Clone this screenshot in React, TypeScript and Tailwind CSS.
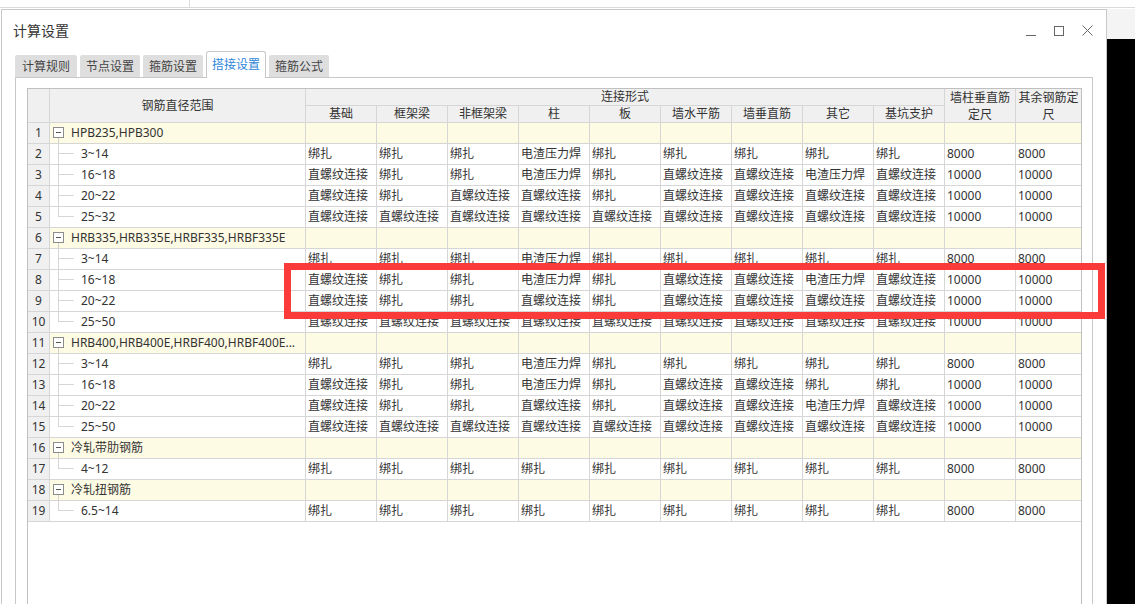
import React from 'react';

const Z = '直螺纹连接';
const B = '绑扎';
const D = '电渣压力焊';

type Row =
  | { kind: 'group'; no: number; label: string }
  | { kind: 'item'; no: number; label: string; last?: boolean; cells: string[] };

const rows: Row[] = [
  { kind: 'group', no: 1, label: 'HPB235,HPB300' },
  { kind: 'item', no: 2, label: '3~14', cells: [B, B, B, D, B, B, B, B, B, '8000', '8000'] },
  { kind: 'item', no: 3, label: '16~18', cells: [Z, B, B, D, B, Z, Z, D, Z, '10000', '10000'] },
  { kind: 'item', no: 4, label: '20~22', cells: [Z, B, Z, Z, B, Z, Z, Z, Z, '10000', '10000'] },
  { kind: 'item', no: 5, label: '25~32', last: true, cells: [Z, Z, Z, Z, Z, Z, Z, Z, Z, '10000', '10000'] },
  { kind: 'group', no: 6, label: 'HRB335,HRB335E,HRBF335,HRBF335E' },
  { kind: 'item', no: 7, label: '3~14', cells: [B, B, B, D, B, B, B, B, B, '8000', '8000'] },
  { kind: 'item', no: 8, label: '16~18', cells: [Z, B, B, D, B, Z, Z, D, Z, '10000', '10000'] },
  { kind: 'item', no: 9, label: '20~22', cells: [Z, B, B, Z, B, Z, Z, Z, Z, '10000', '10000'] },
  { kind: 'item', no: 10, label: '25~50', last: true, cells: [Z, Z, Z, Z, Z, Z, Z, Z, Z, '10000', '10000'] },
  { kind: 'group', no: 11, label: 'HRB400,HRB400E,HRBF400,HRBF400E...' },
  { kind: 'item', no: 12, label: '3~14', cells: [B, B, B, D, B, B, B, B, B, '8000', '8000'] },
  { kind: 'item', no: 13, label: '16~18', cells: [Z, B, B, D, B, Z, Z, B, B, '10000', '10000'] },
  { kind: 'item', no: 14, label: '20~22', cells: [Z, B, B, Z, B, Z, Z, D, Z, '10000', '10000'] },
  { kind: 'item', no: 15, label: '25~50', last: true, cells: [Z, Z, Z, Z, Z, Z, Z, Z, Z, '10000', '10000'] },
  { kind: 'group', no: 16, label: '冷轧带肋钢筋' },
  { kind: 'item', no: 17, label: '4~12', last: true, cells: [B, B, B, B, B, B, B, B, B, '8000', '8000'] },
  { kind: 'group', no: 18, label: '冷轧扭钢筋' },
  { kind: 'item', no: 19, label: '6.5~14', last: true, cells: [B, B, B, B, B, B, B, B, B, '8000', '8000'] },
];

const subHeads = ['基础', '框架梁', '非框架梁', '柱', '板', '墙水平筋', '墙垂直筋', '其它', '基坑支护'];
const tabs = ['计算规则', '节点设置', '箍筋设置', '搭接设置', '箍筋公式'];

const DataCells = ({ cells, bg }: { cells: string[]; bg: string }) => (
  <>
    {cells.map((c, i) => (
      <div
        key={i}
        className={`${i === 10 ? 'w-[65px]' : 'w-[71px] border-r border-[#d6d6d6]'} ${bg} shrink-0 overflow-hidden whitespace-nowrap pl-[2px] leading-[20px]`}
      >
        {c}
      </div>
    ))}
  </>
);

const RowNo = ({ no }: { no: number }) => (
  <div className="w-[22px] shrink-0 border-r border-[#d6d6d6] bg-[#f0f0f0] text-center leading-[20px]">{no}</div>
);

const App: React.FC = () => {
  return (
    <div className="relative flex h-[604px] w-[1135px] flex-col overflow-hidden bg-white font-['Noto_Sans','Noto_Sans_CJK_SC',sans-serif] text-[12px] text-[#333]">
      {/* strip of the window behind */}
      <div className="flex h-[8px] shrink-0 overflow-hidden border-b border-[#dadada] text-[14px] text-[#333]">
        <div className="-mt-[17px] w-[190px] border-r border-[#dadada] pl-[2px] leading-[20px]">钢筋设置</div>
        <div className="-mt-[17px] pl-[64px] leading-[20px]">钢筋设置</div>
      </div>
      <div className="h-px shrink-0" />

      <div className="flex min-h-0 flex-1">
        <div className="w-px shrink-0" />

        {/* Dialog */}
        <div className="flex w-[1106px] shrink-0 flex-col border border-b-0 border-[#c8c8c8] bg-white">
          {/* Title bar */}
          <div className="flex h-[41px] shrink-0 items-center justify-between pl-[11px] pr-[13px]">
            <span className="text-[14px] text-[#333]">计算设置</span>
            <div className="flex items-center gap-[18px]">
              <svg width="10" height="10" viewBox="0 0 10 10">
                <line x1="0" y1="9.5" x2="10" y2="9.5" stroke="#666" strokeWidth="1" />
              </svg>
              <svg width="10" height="10" viewBox="0 0 10 10">
                <rect x="0.5" y="0.5" width="9" height="9" fill="none" stroke="#666" strokeWidth="1" />
              </svg>
              <svg width="11" height="11" viewBox="0 0 11 11">
                <path d="M0.5 0.5 L10.5 10.5 M10.5 0.5 L0.5 10.5" stroke="#666" strokeWidth="1" />
              </svg>
            </div>
          </div>

          {/* Tabs */}
          <div className="flex h-[26px] shrink-0 items-end gap-[3px] pl-[13px]">
            {tabs.map((t, i) =>
              i === 3 ? (
                <div
                  key={t}
                  className="relative z-10 -mb-px flex h-[27px] w-[60px] items-center justify-center rounded-t-[3px] border border-b-0 border-[#c8c8c8] bg-white text-[#2f86d8]"
                >
                  {t}
                </div>
              ) : (
                <div
                  key={t}
                  className={`flex h-[22px] ${i === 0 ? 'w-[62px]' : 'w-[60px]'} items-center justify-center rounded-t-[2px] bg-[#dedede] pt-[1px] text-[#444]`}
                >
                  {t}
                </div>
              )
            )}
          </div>

          {/* Tab panel */}
          <div className="ml-[13px] flex min-h-0 w-[1078px] flex-1 flex-col border border-b-0 border-[#c8c8c8] pl-[11px] pt-[10px]">
            <div className="min-h-0 w-[1055px] flex-1 border border-b-0 border-[#c0c0c0]">
              {/* Header */}
              <div className="flex h-[34px] border-b border-[#d6d6d6] bg-[#f0f0f0]">
                <div className="w-[22px] shrink-0 border-r border-[#d6d6d6]" />
                <div className="flex w-[256px] shrink-0 items-center justify-center border-r border-[#d6d6d6]">钢筋直径范围</div>
                <div className="flex w-[639px] shrink-0 flex-col">
                  <div className="h-[17px] border-b border-r border-[#d6d6d6] text-center leading-[16px]">连接形式</div>
                  <div className="flex h-[16px]">
                    {subHeads.map((h) => (
                      <div key={h} className="w-[71px] shrink-0 border-r border-[#d6d6d6] text-center leading-[16px]">
                        {h}
                      </div>
                    ))}
                  </div>
                </div>
                <div className="w-[71px] shrink-0 border-r border-[#d6d6d6] text-center leading-[17px]">墙柱垂直筋定尺</div>
                <div className="w-[65px] shrink-0 text-center leading-[17px]">其余钢筋定尺</div>
              </div>

              {/* Body */}
              {rows.map((r) =>
                r.kind === 'group' ? (
                  <div key={r.no} className="flex h-[21px] border-b border-[#d6d6d6]">
                    <RowNo no={r.no} />
                    <div className="flex w-[256px] shrink-0 items-center overflow-hidden whitespace-nowrap border-r border-[#d6d6d6] bg-[#fefbe4] pl-[3px]">
                      <div className="flex h-[20px] w-[11px] shrink-0 flex-col">
                        <div className="h-[4px]" />
                        <div className="flex h-[11px] items-center justify-center border border-[#8c8c8c] bg-white">
                          <div className="h-px w-[5px] bg-[#555]" />
                        </div>
                        <div className="ml-[5px] h-[5px] border-l border-[#d0d0d0]" />
                      </div>
                      <span className="ml-[7px] leading-[20px]">{r.label}</span>
                    </div>
                    <DataCells cells={Array(11).fill('')} bg="bg-[#fefbe4]" />
                  </div>
                ) : (
                  <div key={r.no} className="flex h-[21px] border-b border-[#d6d6d6]">
                    <RowNo no={r.no} />
                    <div className="flex w-[256px] shrink-0 items-stretch border-r border-[#d6d6d6] bg-white">
                      <div className="w-[8px] shrink-0" />
                      <div className="flex w-[16px] shrink-0 flex-col">
                        <div className="h-[10px] border-b border-l border-[#d6d6d6]" />
                        <div className={`h-[10px] ${r.last ? '' : 'border-l border-[#d6d6d6]'}`} />
                      </div>
                      <span className="pl-[7px] leading-[20px]">{r.label}</span>
                    </div>
                    <DataCells cells={r.cells} bg="bg-white" />
                  </div>
                )
              )}
            </div>
          </div>
        </div>

        {/* Right edge: desktop behind */}
        <div className="flex flex-1 flex-col">
          <div className="h-[30px] bg-[#f4f4f4]" />
          <div className="flex-1 bg-black" />
        </div>
      </div>

      {/* Red annotation box */}
      <div className="pointer-events-none absolute left-[284px] top-[263px] h-[56px] w-[821px] border-[7px] border-[#fb3a3a]" />
    </div>
  );
};

export default App;
